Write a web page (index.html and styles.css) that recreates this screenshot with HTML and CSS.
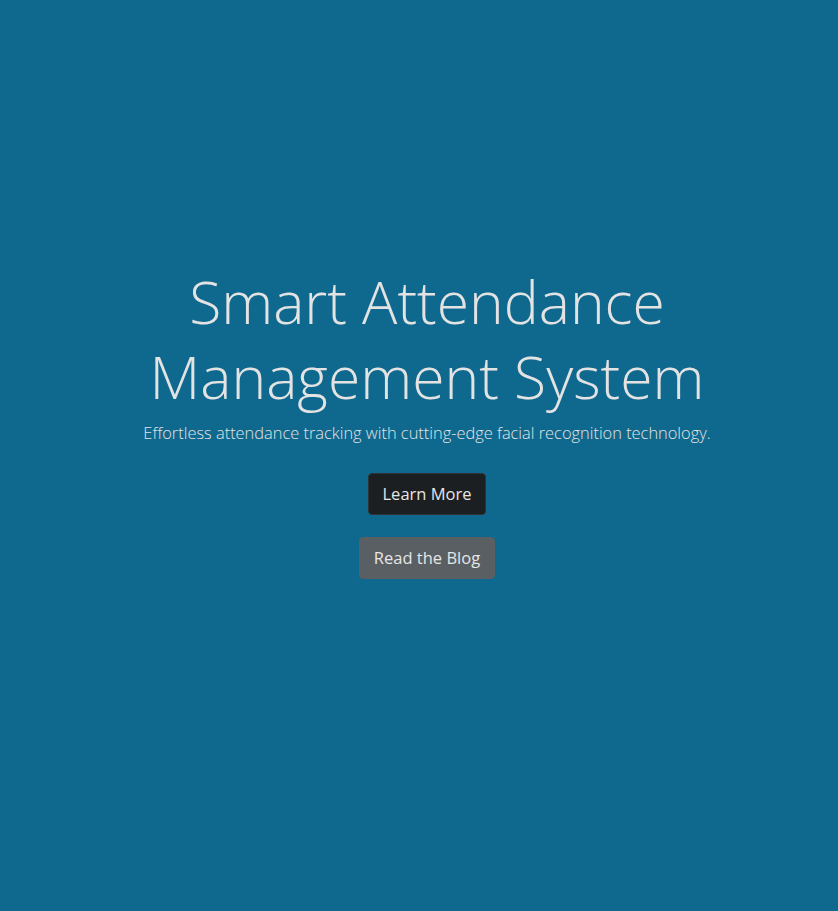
FILE: index.html
```html
<!DOCTYPE html>
<html lang="en">
<head>
<meta charset="utf-8">
<title>Smart Attendance Management System</title>
<link rel="stylesheet" href="styles.css">
</head>
<body>
<main class="hero">
  <h1 class="hero-title">Smart Attendance<br>Management System</h1>
  <p class="hero-lead">Effortless attendance tracking with cutting-edge facial recognition technology.</p>
  <div class="hero-actions">
    <a class="btn btn-dark" href="#">Learn More</a>
    <a class="btn btn-secondary" href="#">Read the Blog</a>
  </div>
</main>
</body>
</html>
```
FILE: styles.css
```css
html, body {
  margin: 0;
  padding: 0;
  height: 100%;
}
body {
  background: #0f698e;
  color: #e3e3e3;
  font-family: "Open Sans", "Noto Sans", sans-serif;
}
.hero {
  box-sizing: border-box;
  min-height: 911px;
  display: flex;
  flex-direction: column;
  align-items: center;
  padding-top: 264px;
  padding-left: 16px;
  text-align: center;
}
.hero-title {
  margin: 0;
  font-weight: 300;
  font-size: 58.8px;
  line-height: 75px;
  color: #e3e3e3;
}
.hero-lead {
  margin: 7px 0 0;
  font-weight: 300;
  font-size: 16.4px;
  line-height: 24px;
}
.hero-actions {
  margin-top: 28px;
  display: flex;
  flex-direction: column;
  align-items: center;
  gap: 22px;
}
.btn {
  display: inline-block;
  box-sizing: border-box;
  height: 42px;
  padding: 0 14px;
  line-height: 40px;
  font-size: 16.5px;
  font-weight: 400;
  color: #e6e6e6;
  text-decoration: none;
  border-radius: 4px;
  border: 1px solid transparent;
}
.btn-dark {
  background: #1c1f21;
  border-color: #2f3336;
}
.btn-secondary {
  background: #5a5f63;
  border-color: #5a5f63;
}
```
